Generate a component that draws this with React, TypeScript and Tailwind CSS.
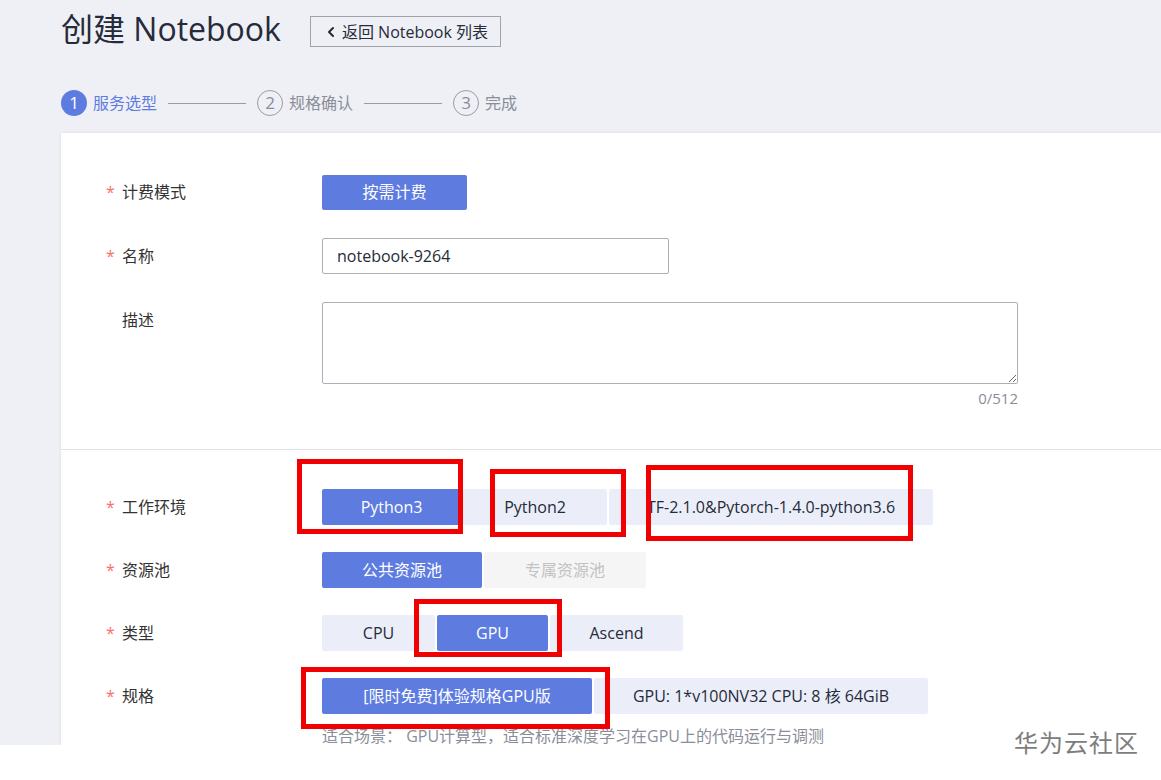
import { ChevronLeft } from 'lucide-react'

const font = { fontFamily: '"Open Sans", "Noto Sans CJK SC", sans-serif' }

function Label({ text, required = true }: { text: string; required?: boolean }) {
  return (
    <div className="w-[216px] shrink-0 flex items-center h-9 text-[16px] text-[#333]">
      <span className="w-4 text-[#f66f6a]">{required ? '*' : ''}</span>
      <span>{text}</span>
    </div>
  )
}

function Seg({ text, w, active, disabled }: { text: string; w: string; active?: boolean; disabled?: boolean }) {
  const cls = active
    ? 'bg-[#5e7ce0] text-white'
    : disabled
      ? 'bg-[#f5f5f6] text-[#c2c2c2]'
      : 'bg-[#ebeef9] text-[#252b3a]'
  return <div className={`${w} h-9 rounded-[2px] flex items-center justify-center text-[16px] ${cls}`}>{text}</div>
}

function Step({ n, text, active }: { n: number; text: string; active?: boolean }) {
  return (
    <div className="flex items-center gap-[6px]">
      <div
        className={
          active
            ? 'w-[26px] h-[26px] rounded-full bg-[#5e7ce0] text-white flex items-center justify-center text-[17px]'
            : 'w-[26px] h-[26px] rounded-full border border-[#9a9ca3] text-[#8a8e99] flex items-center justify-center text-[17px]'
        }
      >
        {n}
      </div>
      <span className={active ? 'text-[16px] text-[#5e7ce0]' : 'text-[16px] text-[#8a8e99]'}>{text}</span>
    </div>
  )
}

export default function App() {
  return (
    <div className="relative w-[1161px] h-[780px] bg-white overflow-hidden" style={font}>
      <div className="h-[745px] bg-[#eff0f5] pl-[61px] overflow-hidden flex flex-col">
        {/* header */}
        <div className="shrink-0 flex items-center h-[58px]">
          <h1 className="text-[32px] text-[#252b3a] leading-none">创建 Notebook</h1>
          <button className="ml-[29px] mt-[5px] h-[31px] px-[12px] border border-[#a0a3ab] flex items-center gap-[3px] text-[16px] text-[#252b3a]">
            <ChevronLeft size={16} strokeWidth={3} />
            返回 Notebook 列表
          </button>
        </div>

        {/* steps */}
        <div className="shrink-0 flex items-start h-[75px] pt-[32px]">
          <Step n={1} text="服务选型" active />
          <div className="w-[78px] h-px bg-[#9a9ca3] mx-[11px] mt-[13px]" />
          <Step n={2} text="规格确认" />
          <div className="w-[78px] h-px bg-[#9a9ca3] mx-[11px] mt-[13px]" />
          <Step n={3} text="完成" />
        </div>

        {/* card */}
        <div className="flex-1 min-h-0 overflow-hidden bg-white shadow-[0_0_3px_rgba(0,0,0,0.08)]">
          <div className="pl-[45px] pt-[41px] pr-[143px] pb-[42px] flex flex-col gap-[28px] text-[#252b3a]">
            <div className="flex items-center">
              <Label text="计费模式" />
              <div className="w-[145px] h-[35px] rounded-[2px] bg-[#5e7ce0] text-white text-[16px] flex items-center justify-center">
                按需计费
              </div>
            </div>
            <div className="flex items-center">
              <Label text="名称" />
              <div className="w-[347px] h-9 border border-[#adb0b8] rounded-[2px] flex items-center px-[14px] text-[16px] text-[#252b3a]">
                notebook-9264
              </div>
            </div>
            <div className="flex items-start">
              <Label text="描述" required={false} />
              <div className="flex-1 flex flex-col items-end">
                <textarea className="w-full h-[82px] border border-[#adb0b8] rounded-[2px] resize-y outline-none" />
                <span className="mt-[5px] text-[15px] text-[#8a8e99] leading-[18px]">0/512</span>
              </div>
            </div>
          </div>

          <div className="h-px bg-[#dfe1e6]" />

          <div className="pl-[45px] pt-[39px] flex flex-col gap-[27px]">
            <div className="flex items-center">
              <Label text="工作环境" />
              <div className="flex gap-[2px]">
                <Seg text="Python3" w="w-[139px]" active />
                <Seg text="Python2" w="w-[144px]" />
                <Seg text="TF-2.1.0&Pytorch-1.4.0-python3.6" w="w-[324px]" />
              </div>
            </div>
            <div className="flex items-center">
              <Label text="资源池" />
              <div className="flex gap-[2px]">
                <Seg text="公共资源池" w="w-[160px]" active />
                <Seg text="专属资源池" w="w-[162px]" disabled />
              </div>
            </div>
            <div className="flex items-center">
              <Label text="类型" />
              <div className="flex gap-[2px]">
                <Seg text="CPU" w="w-[113px]" />
                <Seg text="GPU" w="w-[111px]" active />
                <Seg text="Ascend" w="w-[133px]" />
              </div>
            </div>
            <div className="flex items-center">
              <Label text="规格" />
              <div className="flex gap-[2px]">
                <Seg text="[限时免费]体验规格GPU版" w="w-[270px]" active />
                <Seg text="GPU: 1*v100NV32 CPU: 8 核 64GiB" w="w-[334px]" />
              </div>
            </div>
          </div>
          <div className="pl-[261px] mt-[10px] text-[16px] text-[#8a8e99]">
            适合场景： GPU计算型，适合标准深度学习在GPU上的代码运行与调测
          </div>
        </div>
      </div>

      {/* annotation boxes */}
      <div className="absolute left-[297px] top-[459px] w-[166px] h-[75px] border-[5px] border-[#f00000]" />
      <div className="absolute left-[490px] top-[469px] w-[136px] h-[68px] border-[5px] border-[#f00000]" />
      <div className="absolute left-[646px] top-[465px] w-[267px] h-[76px] border-[5px] border-[#f00000]" />
      <div className="absolute left-[414px] top-[599px] w-[148px] h-[58px] border-[5px] border-[#f00000]" />
      <div className="absolute left-[301px] top-[667px] w-[309px] h-[62px] border-[5px] border-[#f00000]" />

      {/* watermark */}
      <div
        className="absolute left-[1014px] top-[724px] text-[24px] text-[#7d7d7d] tracking-[1px]"
        style={{ fontFamily: '"Noto Sans CJK SC", sans-serif' }}
      >
        华为云社区
      </div>
    </div>
  )
}
